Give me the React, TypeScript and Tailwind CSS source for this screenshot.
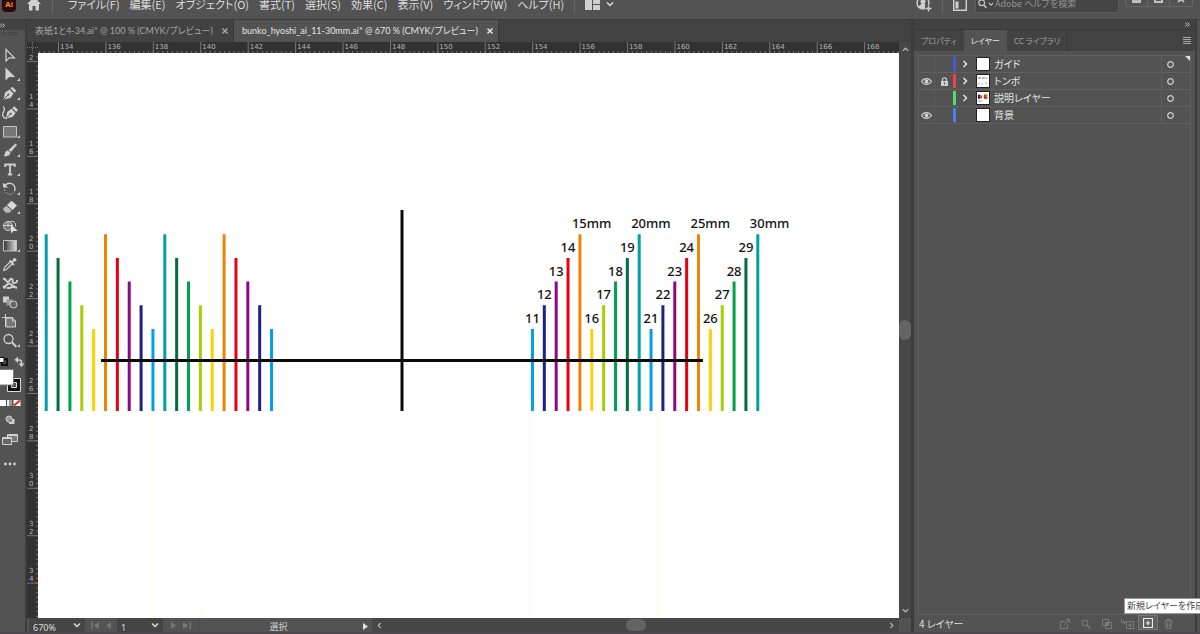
import { useState } from "react";
import type { ReactNode } from "react";

const MENUS = [
  "ファイル(F)",
  "編集(E)",
  "オブジェクト(O)",
  "書式(T)",
  "選択(S)",
  "効果(C)",
  "表示(V)",
  "ウィンドウ(W)",
  "ヘルプ(H)",
];

const DOCUMENTS = [
  { name: "表紙1と4-34.ai* @ 100 % (CMYK/プレビュー)", active: false },
  { name: "bunko_hyoshi_ai_11-30mm.ai* @ 670 % (CMYK/プレビュー)", active: true },
];

// one colour per last digit of the spine width, 11mm first
const SPINE_COLORS = [
  "#00a0e9",
  "#1d2088",
  "#8f0783",
  "#e60012",
  "#f08300",
  "#ffd100",
  "#abcd03",
  "#00a24c",
  "#006e3c",
  "#00a0a4",
];

const CENTER = 364;
const MM = 11.86;
const STEP = 23.7;
const BOTTOM = 358;

const spines = Array.from({ length: 20 }, (_, i) => {
  const level = i % 5;
  return {
    mm: i + 11,
    color: SPINE_COLORS[i % 10],
    top: 276 - level * STEP,
    full: level === 4,
  };
});

type Layer = {
  name: string;
  bar: string;
  visible: boolean;
  locked: boolean;
  group: boolean;
  thumb?: ReactNode;
};

const LAYERS: Layer[] = [
  { name: "ガイド", bar: "bg-[#4b55d6]", visible: false, locked: false, group: true },
  {
    name: "トンボ",
    bar: "bg-[#f0404c]",
    visible: true,
    locked: true,
    group: true,
    thumb: (
      <>
        <path d="M1 3.5h4M6 3.5h3M10 3.5h2" stroke="#555" />
        <path d="M1 10.5h2M5 10.5h2" stroke="#999" />
        <path d="M10 9.5h2" stroke="#5a8" />
      </>
    ),
  },
  {
    name: "説明レイヤー",
    bar: "bg-[#4fe06a]",
    visible: false,
    locked: false,
    group: true,
    thumb: (
      <>
        <path d="M1 3h3v5H1z" fill="#333" />
        <path d="M4 4h2v3H4z" fill="#d33" />
        <path d="M8 3h4v5H8z" fill="#a33" />
        <path d="M10 3h2v3h-2z" fill="#e80" />
        <path d="M1 10h5v1H1z" fill="#888" />
      </>
    ),
  },
  { name: "背景", bar: "bg-[#4c80ee]", visible: true, locked: false, group: false },
];

const TOOLS: { label: string; corner: boolean; icon: ReactNode }[] = [
  {
    label: "選択ツール",
    corner: false,
    icon: <path d="M6 3.5v11.5l3.2-3.2h5.2z" fill="none" stroke="#d0d0d0" strokeWidth="1.2" />,
  },
  {
    label: "ダイレクト選択ツール",
    corner: true,
    icon: <path d="M5.5 2.5v13l3.7-3.6h6z" fill="#d0d0d0" />,
  },
  {
    label: "ペンツール",
    corner: true,
    icon: (
      <>
        <path d="M3.5 15.5l1.6-7 4.4-3 4 4-3 4.4z" fill="#d0d0d0" />
        <path d="M10.5 4.5l1.8-1.8 4 4-1.8 1.8z" fill="#d0d0d0" />
        <path d="M4 15l4-4" stroke="#535353" />
        <circle cx="8.4" cy="10.6" r="1" fill="#535353" />
      </>
    ),
  },
  {
    label: "曲線ツール",
    corner: false,
    icon: (
      <>
        <path d="M6 15.5l1.200-6.500 4.300-3.200 4.200 4.200-3.200 4z" fill="#d0d0d0" />
        <path d="M12.400 5l1.800-1.800 3.900 3.900-1.800 1.800z" fill="#d0d0d0" />
        <path d="M6.500 15l3.700-3.800" stroke="#535353" />
        <circle cx="10.600" cy="10.800" r="1" fill="#535353" />
        <path d="M3 3.500c3 1.500 1 4 0 6.500s0 5.500 4 5.500" fill="none" stroke="#d0d0d0" strokeWidth="1.300" />
      </>
    ),
  },
  {
    label: "長方形ツール",
    corner: true,
    icon: <path d="M3.5 4.5h13v10.500h-13z" fill="#777" stroke="#c4c4c4" />,
  },
  {
    label: "ブラシツール",
    corner: true,
    icon: (
      <>
        <path d="M15.5 2.500l1.500 1.200-6 7.300-2.500-2z" fill="#d0d0d0" />
        <path d="M8 9.500l2.500 2.200c-.5 3-4 4-7 3.300 1.500-.8 1-2 1.800-3.800.6-1.200 1.700-1.700 2.700-1.700z" fill="#d0d0d0" />
      </>
    ),
  },
  {
    label: "文字ツール",
    corner: true,
    icon: (
      <path d="M5.200 7V4.500h9.600V7M10 4.500v9.500M7.800 14.500h4.400" fill="none" stroke="#d0d0d0" strokeWidth="1.800" />
    ),
  },
  {
    label: "回転ツール",
    corner: true,
    icon: (
      <>
        <path d="M5 6.500c2.500-3 7-3 9.200.2 1 1.600 1.200 3.500.4 5.300" fill="none" stroke="#d0d0d0" strokeWidth="1.400" />
        <path d="M3 3.500v5h5z" fill="#d0d0d0" />
        <path d="M4.500 10.500c.5 5 7.500 6.500 10 2" fill="none" stroke="#b8b8b8" strokeDasharray="1.300 1.300" />
      </>
    ),
  },
  {
    label: "消しゴムツール",
    corner: true,
    icon: (
      <>
        <path d="M7 7l4.500-4.200 5.500 4.700-4.500 4.500z" fill="#d8d8d8" />
        <path d="M6.300 7.700l5.500 4.900-2.500 2.200H6l-2.700-2.500v-1.800z" fill="#b8b8b8" />
      </>
    ),
  },
  {
    label: "シェイプ形成ツール",
    corner: false,
    icon: (
      <>
        <circle cx="8" cy="9" r="4.500" fill="#777" stroke="#d0d0d0" />
        <path d="M3.500 8.500h9M8 4.500v5" stroke="#d0d0d0" />
        <path d="M9 5c4-2 7.500.5 6.500 4.500" fill="none" stroke="#d0d0d0" />
        <path d="M11 7.500v9l2.600-2.500h4.200z" fill="#e0e0e0" />
      </>
    ),
  },
  {
    label: "グラデーションツール",
    corner: true,
    icon: (
      <>
        <defs>
          <linearGradient id="tool-gradient">
            <stop offset="0" stopColor="#333" />
            <stop offset="1" stopColor="#ddd" />
          </linearGradient>
        </defs>
        <path d="M3.500 4.500h13v10.500h-13z" fill="url(#tool-gradient)" stroke="#c4c4c4" />
      </>
    ),
  },
  {
    label: "スポイトツール",
    corner: false,
    icon: (
      <>
        <path d="M10 7l-5.500 5.500-.8 2.800 2.800-.8L12 9" fill="none" stroke="#d0d0d0" strokeWidth="1.200" />
        <path d="M9.500 5.500l4.500 4.500M11.500 7.500l3-3" stroke="#d0d0d0" strokeWidth="2" />
        <circle cx="14.700" cy="4.800" r="1.800" fill="#d0d0d0" />
      </>
    ),
  },
  {
    label: "パペットワープツール",
    corner: false,
    icon: (
      <>
        <path
          d="M3 5c3-1 3 3 5 3s1-4 4-3c2 1-1 4 2 4s3-1 3-3"
          fill="none"
          stroke="#d0d0d0"
          strokeWidth="2"
        />
        <path d="M4 13.500c2-1 3-4 5-4s3 3 8 4.500M7 14c3 .5 5-2 9-1" fill="none" stroke="#d0d0d0" strokeWidth="2" />
        <circle cx="4.500" cy="13" r="1.800" fill="#d0d0d0" />
      </>
    ),
  },
  {
    label: "ブレンドツール",
    corner: false,
    icon: (
      <>
        <path d="M3 3.500h6v6H3z" fill="#d0d0d0" />
        <path d="M6.500 6.500h6v6h-6z" fill="#999" />
        <circle cx="13.500" cy="11.500" r="3.500" fill="#666" stroke="#d0d0d0" />
      </>
    ),
  },
  {
    label: "アートボードツール",
    corner: false,
    icon: (
      <>
        <path d="M5.500 2v13M2 5.500h11" fill="none" stroke="#d0d0d0" />
        <path d="M6 6h6.500l3 3v6H6z" fill="#777" stroke="#d0d0d0" />
        <path d="M12.500 6v3h3" fill="none" stroke="#d0d0d0" />
      </>
    ),
  },
  {
    label: "ズームツール",
    corner: true,
    icon: (
      <>
        <circle cx="8.500" cy="8" r="4.500" fill="none" stroke="#d0d0d0" strokeWidth="1.300" />
        <path d="M11.800 11.300l4.500 4.500" stroke="#d0d0d0" strokeWidth="2" />
      </>
    ),
  },
];

const Chevron = ({ d, className }: { d: string; className: string }) => (
  <svg viewBox="0 0 8 8" className={className} aria-hidden="true">
    <path d={d} fill="none" stroke="currentColor" strokeWidth="1.500" />
  </svg>
);

const DOWN = "M1 2.500l3 3 3-3";
const UP = "M1 5.500l3-3 3 3";
const LEFT = "M5.500 1l-3 3 3 3";
const RIGHT = "M2.500 1l3 3-3 3";

const MenuBar = () => (
  <header className="flex h-5 shrink-0 items-end overflow-hidden border-b border-[#3c3c3c] bg-[#535353]">
    <div className="flex h-[30px] w-full shrink-0 items-center">
      <div className="ml-0.5 flex h-4 w-3.5 items-end justify-center rounded-sm bg-[#2d0b08] pb-[3px] font-['Liberation_Sans'] text-[8px] leading-none font-bold text-[#ff9a00]">
        Ai
      </div>
      <button aria-label="ホーム" className="ml-2.5">
        <svg viewBox="0 0 16 16" className="h-4 w-4">
          <path d="M8 1l7 7h-2v6.500H9.500V10h-3v4.500H3V8H1z" fill="#d0d0d0" />
        </svg>
      </button>
      <div className="mx-2.5 h-5 w-px bg-[#666]" />
      <nav className="ml-[5px] flex gap-2.5 text-[11px] leading-none whitespace-nowrap text-[#dcdcdc]">
        {MENUS.map((menu) => (
          <button key={menu}>{menu}</button>
        ))}
      </nav>
      <div className="ml-2.5 h-5 w-px bg-[#666]" />
      <button aria-label="ドキュメントレイアウト" className="ml-2.5 flex items-center gap-1.5 text-[#dcdcdc]">
        <svg viewBox="0 0 15 11" className="h-[11px] w-[15px]">
          <path d="M0 0h7v11H0zM8 0h7v5H8zM8 6h7v5H8z" fill="#d0d0d0" />
        </svg>
        <Chevron d={DOWN} className="h-2 w-2" />
      </button>
      <button aria-label="アカウント" className="ml-auto">
        <svg viewBox="0 0 16 16" className="h-4 w-4">
          <circle cx="7" cy="7" r="6" fill="none" stroke="#d0d0d0" strokeWidth="1.400" />
          <path d="M7 3a2.500 2.500 0 0 1 1.500 4.500c0 1.500 2.500 1 2.500 3.500-2 2-6 2-8 0 0-2.500 2.500-2 2.500-3.500A2.500 2.500 0 0 1 7 3z" fill="#d0d0d0" />
          <path d="M9 9h7v7H9z" fill="#535353" />
          <path d="M12.500 9.500v6M9.500 12.500h6" stroke="#d0d0d0" strokeWidth="1.400" />
        </svg>
      </button>
      <div className="ml-2.5 h-5 w-px bg-[#666]" />
      <button aria-label="ワークスペース" className="ml-2.5">
        <svg viewBox="0 0 14 13" className="h-[13px] w-3.5">
          <path d="M.7.700h12.600v11.600H.7z" fill="none" stroke="#d0d0d0" strokeWidth="1.400" />
          <path d="M2.500 3.500h3v7h-3z" fill="#d0d0d0" />
        </svg>
      </button>
      <label className="ml-2 flex h-[18px] w-36 items-center gap-px rounded-xs border border-[#5e5e5e] bg-[#454545] pl-0.5 text-[#c8c8c8]">
        <svg viewBox="0 0 9 10" className="h-2.5 w-[9px] shrink-0" aria-hidden="true">
          <circle cx="3.700" cy="3.700" r="2.900" fill="none" stroke="currentColor" strokeWidth="1.200" />
          <path d="M5.800 6l2.700 3" stroke="currentColor" strokeWidth="1.500" />
        </svg>
        <Chevron d={DOWN} className="h-1.5 w-1.5 shrink-0" />
        <input
          type="search"
          aria-label="ヘルプを検索"
          placeholder="Adobe ヘルプを検索"
          className="w-full min-w-0 bg-transparent text-[9px] text-[#dcdcdc] outline-none placeholder:text-[#939393]"
        />
      </label>
      <div className="mr-[7px] ml-1.5 flex h-[18px] self-start divide-x divide-[#666] rounded-b-xs border border-[#666] text-[#c0c0c0]">
        <button aria-label="最小化" className="flex w-[22px] items-end justify-center pb-[3px]">
          <svg viewBox="0 0 9 3" className="h-[3px] w-[9px]">
            <path d="M0 0h9v3H0z" fill="currentColor" />
          </svg>
        </button>
        <button aria-label="最大化" className="flex w-[22px] items-end justify-center pb-[3px]">
          <svg viewBox="0 0 9 8" className="h-2 w-[9px]">
            <path d="M1 1h7v6H1z" fill="none" stroke="currentColor" strokeWidth="2" />
          </svg>
        </button>
        <button aria-label="閉じる" className="flex w-[22px] items-end justify-center pb-[3px]">
          <svg viewBox="0 0 8 8" className="h-2 w-2">
            <path d="M1 1l6 6M7 1L1 7" stroke="currentColor" strokeWidth="1.800" />
          </svg>
        </button>
      </div>
    </div>
  </header>
);

const Toolbar = () => (
  <aside className="flex w-[27px] shrink-0 flex-col border-r-2 border-[#3c3c3c] bg-[#535353]">
    <div className="flex h-2.5 shrink-0 items-center bg-[#424242]">
      <svg viewBox="0 0 6 5" className="h-[5px] w-1.5">
        <path d="M0 .5l2 2-2 2M2.500.500l2 2-2 2" fill="none" stroke="#c8c8c8" />
      </svg>
    </div>
    <div className="flex h-4 shrink-0 items-start pt-0.5">
      <svg viewBox="0 0 16 4" className="ml-0.5 h-1 w-4">
        <path d="M0 .5h16M0 2.500h16" stroke="#3a3a3a" strokeDasharray="1 1" />
      </svg>
    </div>
    {TOOLS.map((tool) => (
      <button key={tool.label} aria-label={tool.label} className="h-[19px] w-[25px] shrink-0">
        <svg viewBox="0 0 25 19" className="h-[19px] w-[25px]">
          {tool.icon}
          {tool.corner && <path d="M20 13v3h-3z" fill="#d0d0d0" />}
        </svg>
      </button>
    ))}
    <div className="h-1.5 shrink-0" />
    <svg viewBox="0 0 25 43" className="h-[43px] w-[25px] shrink-0" role="img" aria-label="塗りと線">
      <path d="M2 3h5v6H2z" fill="#535353" stroke="#111" strokeWidth="2" />
      <path d="M-1 1.500h5v5h-5z" fill="#fff" stroke="#111" />
      <path d="M17 4h2.500c1.500 0 2 1 2 2.500V9" fill="none" stroke="#d0d0d0" strokeWidth="1.500" />
      <path d="M18 .5v6.500l-3.500-3.200zM18.500 7.500h6L21.500 11z" fill="#d0d0d0" />
      <path d="M7.500 22.500h13v13h-13z" fill="#111" stroke="#ddd" />
      <path d="M11.500 26.500h5v5h-5z" fill="#535353" stroke="#ddd" />
      <path d="M-1 13.500h14.500V29H-1z" fill="#fff" stroke="#777" />
    </svg>
    <svg viewBox="0 0 25 13" className="h-[13px] w-[25px] shrink-0" role="img" aria-label="カラーモード">
      <path d="M0 1h6v6H0z" fill="#fff" />
      <path d="M7 1h2v6H7z" fill="#eee" />
      <path d="M9 1h3v6H9z" fill="#999" />
      <path d="M13.500 1h7v6h-7z" fill="#fff" />
      <path d="M14 6.500L20 1.500" stroke="#e02020" strokeWidth="2" />
    </svg>
    <button aria-label="描画方法" className="h-[19px] w-[25px] shrink-0">
      <svg viewBox="0 0 25 19" className="h-[19px] w-[25px]">
        <circle cx="9" cy="7" r="3" fill="#999" stroke="#d0d0d0" />
        <path d="M9 7h5.500v5H9z" fill="#d0d0d0" />
        <circle cx="10.500" cy="8.500" r="1.500" fill="#777" />
      </svg>
    </button>
    <button aria-label="スクリーンモード" className="h-[19px] w-[25px] shrink-0">
      <svg viewBox="0 0 25 19" className="h-[19px] w-[25px]">
        <path d="M7.500 3.500h10v7h-10z" fill="#777" stroke="#d0d0d0" />
        <path d="M2.500 6.500h9v7h-9z" fill="#666" stroke="#d0d0d0" />
        <path d="M3 7.500h8M8 4.500h9" stroke="#d0d0d0" />
      </svg>
    </button>
    <button aria-label="ツールバーを編集" className="mt-1 h-[19px] w-[25px] shrink-0">
      <svg viewBox="0 0 25 19" className="h-[19px] w-[25px]">
        <circle cx="5.500" cy="10" r="1.400" fill="#d0d0d0" />
        <circle cx="10" cy="10" r="1.400" fill="#d0d0d0" />
        <circle cx="14.500" cy="10" r="1.400" fill="#d0d0d0" />
      </svg>
    </button>
  </aside>
);

const DocumentTabs = () => (
  <div
    className="flex h-[22px] shrink-0 bg-[#424242] font-['Lato','Noto_Sans_CJK_JP',sans-serif] text-[9px] whitespace-nowrap"
    role="tablist"
  >
    {DOCUMENTS.map(({ name, active }) => (
      <div
        key={name}
        className={`flex items-center justify-between gap-2 border-r border-[#383838] pr-1 pl-2 ${
          active ? "min-w-[259px] bg-[#535353] text-[#e4e4e4]" : "min-w-[207px] text-[#a4a4a4]"
        }`}
      >
        <button role="tab" aria-selected={active}>
          {name}
        </button>
        <button aria-label="閉じる">
          <svg viewBox="0 0 8 8" className="h-2 w-2">
            <path d="M1.500 1.500l5 5M6.500 1.500l-5 5" stroke="currentColor" strokeWidth="1.500" />
          </svg>
        </button>
      </div>
    ))}
  </div>
);

const TICK = 47.42;

const HorizontalRuler = () => (
  <svg className="h-[11px] w-full bg-[#323232]" role="img" aria-label="水平ルーラー">
    <defs>
      <pattern id="h-ticks" x="20" width="4.742" height="11" patternUnits="userSpaceOnUse">
        <path d="M.5 9v2" stroke="#777" />
      </pattern>
    </defs>
    <rect width="100%" height="11" fill="url(#h-ticks)" />
    {Array.from({ length: 18 }, (_, i) => (
      <g key={i}>
        <path d={`M${20.5 + i * TICK} 0v11`} stroke="#777" />
        <text x={22 + i * TICK} y="7" fill="#b4b4b4" className="font-['DejaVu_Sans'] text-[7px]">
          {134 + i * 2}
        </text>
      </g>
    ))}
  </svg>
);

const VerticalRuler = () => (
  <svg className="h-full w-[11px] bg-[#323232]" role="img" aria-label="垂直ルーラー">
    <defs>
      <pattern id="v-ticks" y="8" width="11" height="4.742" patternUnits="userSpaceOnUse">
        <path d="M9 .5h2" stroke="#777" />
      </pattern>
    </defs>
    <rect width="11" height="100%" fill="url(#v-ticks)" />
    {Array.from({ length: 12 }, (_, i) => {
      const y = 8.5 + i * TICK;
      const [tens, ones] = String(12 + i * 2);
      return (
        <g key={i} fill="#b4b4b4" className="font-['DejaVu_Sans'] text-[7px]">
          <path d={`M0 ${y}h11`} stroke="#777" />
          {i > 0 && (
            <text x="2" y={y - 10}>
              {tens}
            </text>
          )}
          <text x="2" y={y - 2}>
            {ones}
          </text>
        </g>
      );
    })}
  </svg>
);

const Artboard = () => (
  <svg className="h-full w-full bg-white" role="img" aria-label="背幅トンボ">
    <g fill="#fffef6">
      <rect x="109" y="358" width="9" height="100%" />
      <rect x="161" y="358" width="4" height="100%" />
      <rect x="491" y="358" width="2" height="100%" />
      <rect x="618" y="358" width="5" height="100%" />
    </g>
    {spines.map(({ mm, color, top, full }) => {
      const right = CENTER + mm * MM;
      const left = CENTER - mm * MM;
      return (
        <g key={mm}>
          <path
            d={`M${left} ${top}V${BOTTOM}M${right} ${top}V${BOTTOM}`}
            stroke={color}
            strokeWidth="3"
          />
          <text
            x={full ? right - 8 : right}
            y={top - 6}
            textAnchor={full ? "start" : "middle"}
            fill="#111"
            className="font-['Noto_Sans'] text-[13px] font-medium"
          >
            {full ? `${mm}mm` : mm}
          </text>
        </g>
      );
    })}
    <path d={`M63 307.500H665M${CENTER} 157V${BOTTOM}`} stroke="#0a0a0a" strokeWidth="3" />
  </svg>
);

const VerticalScrollbar = () => (
  <div className="flex w-3 shrink-0 flex-col items-center justify-between bg-[#474747] py-1 text-[#b0b0b0]">
    <button aria-label="上へスクロール" className="flex">
      <Chevron d={UP} className="h-[7px] w-[7px]" />
    </button>
    <div className="h-5 w-3 rounded-md bg-[#646464]" />
    <button aria-label="下へスクロール" className="flex">
      <Chevron d={DOWN} className="h-[7px] w-[7px]" />
    </button>
  </div>
);

const StatusSelect = ({ label, value, className }: { label: string; value: string; className: string }) => (
  <div className={`relative flex h-full items-center bg-[#454545] ${className}`}>
    <select
      aria-label={label}
      className="h-full w-full appearance-none bg-transparent pt-1 pl-1 font-['Noto_Sans'] text-[9px] leading-3 text-[#dcdcdc] outline-none"
    >
      <option>{value}</option>
    </select>
    <Chevron d={DOWN} className="pointer-events-none absolute right-1 h-2 w-2 text-[#dcdcdc]" />
  </div>
);

const StatusBar = () => (
  <div className="flex h-3.5 shrink-0 items-center bg-[#535353] text-[10px]">
    <StatusSelect label="ズーム" value="670%" className="ml-0.5 w-14" />
    <div className="flex w-8 items-center justify-center gap-[7px]">
      <button aria-label="最初">
        <svg viewBox="0 0 8 7" className="h-[7px] w-2">
          <path d="M0 0h1.500v7H0zM8 0v7L2.500 3.500z" fill="#777" />
        </svg>
      </button>
      <button aria-label="前へ">
        <svg viewBox="0 0 5 7" className="h-[7px] w-[5px]">
          <path d="M5 0v7L0 3.500z" fill="#777" />
        </svg>
      </button>
    </div>
    <StatusSelect label="アートボード" value="1" className="w-[46px]" />
    <div className="flex w-[35px] items-center justify-center gap-[7px]">
      <button aria-label="次へ">
        <svg viewBox="0 0 5 7" className="h-[7px] w-[5px]">
          <path d="M0 0v7l5-3.500z" fill="#777" />
        </svg>
      </button>
      <button aria-label="最後">
        <svg viewBox="0 0 8 7" className="h-[7px] w-2">
          <path d="M6.500 0H8v7H6.500zM0 0v7l5.500-3.500z" fill="#777" />
        </svg>
      </button>
    </div>
    <button className="relative flex h-full w-[174px] items-center justify-center border-l border-[#484848] pt-0.5 pr-3.5 text-[9px] leading-none text-[#d0d0d0]">
      選択
      <svg viewBox="0 0 5 7" className="absolute right-1 h-[7px] w-[5px]">
        <path d="M0 0v7l5-3.500z" fill="#e0e0e0" />
      </svg>
    </button>
    <div className="flex h-full flex-1 items-center justify-between bg-[#474747] px-1 text-[#b0b0b0]">
      <button aria-label="左へスクロール">
        <Chevron d={LEFT} className="h-[7px] w-[7px]" />
      </button>
      <div className="h-3 w-5 rounded-md bg-[#646464]" />
      <button aria-label="右へスクロール">
        <Chevron d={RIGHT} className="h-[7px] w-[7px]" />
      </button>
    </div>
    <div className="h-full w-3 shrink-0 bg-[#535353]" />
  </div>
);

const Eye = () => (
  <svg viewBox="0 0 11 7" className="h-[7px] w-[11px]">
    <path d="M.5 3.500C3-.3 8-.3 10.500 3.500 8 7.300 3 7.300.5 3.500z" fill="none" stroke="#cfcfcf" strokeWidth="1.200" />
    <circle cx="5.500" cy="3.500" r="1.900" fill="#cfcfcf" />
  </svg>
);

const Lock = () => (
  <svg viewBox="0 0 7 9" className="h-[9px] w-[7px]">
    <path d="M1.500 4V2.500C1.500.2 5.500.200 5.500 2.500V4" fill="none" stroke="#cfcfcf" strokeWidth="1.200" />
    <path d="M0 4h7v5H0z" fill="#cfcfcf" />
    <path d="M3.500 5.500v2" stroke="#535353" />
  </svg>
);

const LayerRow = ({ layer }: { layer: Layer }) => {
  const [visible, setVisible] = useState(layer.visible);
  const [locked, setLocked] = useState(layer.locked);

  return (
    <li className="flex h-[17px] items-center border-b border-[#606060]">
      <button
        aria-label="表示の切り替え"
        onClick={() => setVisible(!visible)}
        className="flex h-full w-4 items-center justify-center border-r border-[#5c5c5c]"
      >
        {visible && <Eye />}
      </button>
      <button
        aria-label="ロックの切り替え"
        onClick={() => setLocked(!locked)}
        className="flex h-full w-[18px] items-center justify-center"
      >
        {locked && <Lock />}
      </button>
      <div className={`h-3.5 w-[3px] ${layer.bar}`} />
      <div className="flex w-[18px] justify-center text-[#e4e4e4]">
        {layer.group && (
          <button aria-label="展開">
            <Chevron d={RIGHT} className="h-2 w-2" />
          </button>
        )}
      </div>
      <svg viewBox="0 0 14 14" className="ml-0.5 h-3.5 w-3.5 border border-[#222] bg-white">
        {layer.thumb}
      </svg>
      <span className="flex-1 pl-1 text-[10px] leading-none text-[#e4e4e4]">{layer.name}</span>
      <button
        aria-label="ターゲット"
        className="flex h-full w-[29px] items-center border-l border-[#606060] pl-[5px]"
      >
        <svg viewBox="0 0 7 7" className="h-[7px] w-[7px]">
          <circle cx="3.500" cy="3.500" r="2.800" fill="none" stroke="#cfcfcf" strokeWidth="1.200" />
        </svg>
      </button>
    </li>
  );
};

const PanelFooter = () => (
  <div className="flex h-[17px] shrink-0 items-center pr-4 pl-[5px] text-[#7c7c7c]">
    <span className="text-[10px] leading-none text-[#dcdcdc]">4 レイヤー</span>
    <div className="ml-auto flex h-full items-center">
      <button aria-label="書き出し用に追加" className="flex w-[21px] justify-center">
        <svg viewBox="0 0 10 10" className="h-2.5 w-2.5" fill="none" stroke="currentColor">
          <path d="M5 2.500H.5v7h7V5M4 6l5-5M6 .5h3.500V4" />
        </svg>
      </button>
      <button aria-label="オブジェクトを検索" className="flex w-[21px] justify-center">
        <svg viewBox="0 0 10 10" className="h-2.5 w-2.5" fill="none" stroke="currentColor">
          <circle cx="4" cy="4" r="3" />
          <path d="M6 6l3.500 3.500" strokeWidth="1.500" />
        </svg>
      </button>
      <button aria-label="クリッピングマスク" className="flex w-[21px] justify-center">
        <svg viewBox="0 0 10 10" className="h-2.5 w-2.5" fill="none" stroke="currentColor">
          <path d="M.5.500h6v6h-6zM3.500 3.500h6v6h-6z" />
          <path d="M4 4h2v2H4z" fill="currentColor" />
        </svg>
      </button>
      <button aria-label="サブレイヤー" className="flex w-[21px] justify-center">
        <svg viewBox="0 0 13 10" className="h-2.5 w-[13px]" fill="none" stroke="currentColor">
          <path d="M.5 0v3.500H4M2.500 1.500l2 2-2 2M5.500 2.500h7v7h-7zM9 4v4M7 6h4" />
        </svg>
      </button>
      <div className="relative h-full">
        <button
          aria-label="新規レイヤーを作成"
          className="flex h-[15px] w-5 items-center justify-center border border-[#777] bg-[#606060]"
        >
          <svg viewBox="0 0 10 10" className="h-2.5 w-2.5" fill="none" stroke="#eee">
            <path d="M.5.500h9v9h-9zM5 3v4M3 5h4" strokeWidth="1.200" />
          </svg>
        </button>
        <div
          role="tooltip"
          className="absolute right-[-60px] bottom-[18px] h-4 w-[94px] border border-[#999] bg-white px-0.5 text-[9px] leading-[14px] whitespace-nowrap text-[#444]"
        >
          新規レイヤーを作成
        </div>
      </div>
      <button aria-label="削除" className="flex w-[21px] justify-center">
        <svg viewBox="0 0 9 10" className="h-2.5 w-[9px]" fill="none" stroke="currentColor">
          <path d="M.5 2h8M3 2V.5h3V2M1.500 2l.5 7.500h5l.5-7.500M3.500 4v4M5.500 4v4" />
        </svg>
      </button>
    </div>
  </div>
);

const LayersPanel = () => (
  <aside className="flex w-[281px] shrink-0 flex-col bg-[#535353]">
    <div className="flex h-2.5 shrink-0 items-center justify-end border-b border-[#383838] bg-[#424242] pr-1">
      <svg viewBox="0 0 6 5" className="h-[5px] w-1.5">
        <path d="M0 .5l2 2-2 2M2.500.500l2 2-2 2" fill="none" stroke="#c8c8c8" />
      </svg>
    </div>
    <div
      className="flex h-[21px] shrink-0 items-center bg-[#424242] text-[8px] leading-none whitespace-nowrap text-[#a0a0a0]"
      role="tablist"
    >
      <button role="tab" aria-selected={false} className="h-full px-[7px]">
        プロパティ
      </button>
      <button role="tab" aria-selected={true} className="h-full bg-[#535353] px-[7px] text-[#e4e4e4]">
        レイヤー
      </button>
      <button role="tab" aria-selected={false} className="h-full border-r border-[#383838] px-[7px]">
        CC ライブラリ
      </button>
      <button aria-label="パネルメニュー" className="mr-1 ml-auto">
        <svg viewBox="0 0 8 7" className="h-[7px] w-2">
          <path d="M0 .5h8M0 2.500h8M0 4.500h8M0 6.500h8" stroke="#a8a8a8" />
        </svg>
      </button>
    </div>
    <div className="relative mx-1 mt-1 flex-1 border border-[#5f5f5f]">
      <ul>
        {LAYERS.map((layer) => (
          <LayerRow key={layer.name} layer={layer} />
        ))}
      </ul>
      <svg viewBox="0 0 5 5" className="absolute top-0 right-0 h-[5px] w-[5px]">
        <path d="M0 0h5v5z" fill="#e0e0e0" />
      </svg>
    </div>
    <PanelFooter />
  </aside>
);

export default function App() {
  return (
    <div
      lang="ja"
      className="flex h-screen flex-col overflow-hidden bg-[#3c3c3c] font-['Noto_Sans_CJK_JP',sans-serif] [font-feature-settings:'palt']"
    >
      <MenuBar />
      <div className="flex min-h-0 flex-1">
        <Toolbar />
        <main className="flex min-w-0 flex-1 flex-col">
          <DocumentTabs />
          <div className="flex min-h-0 flex-1">
            <div className="grid min-w-0 flex-1 grid-cols-[11px_minmax(0,1fr)] grid-rows-[11px_minmax(0,1fr)]">
              <div className="flex items-center justify-center bg-[#323232]">
                <svg viewBox="0 0 11 11" className="h-[11px] w-[11px]">
                  <path d="M5.500 0v11M0 5.500h11" stroke="#777" strokeDasharray="1 1" />
                </svg>
              </div>
              <HorizontalRuler />
              <VerticalRuler />
              <Artboard />
            </div>
            <VerticalScrollbar />
          </div>
          <StatusBar />
        </main>
        <div className="flex shrink-0 border-r-2 border-l-[3px] border-[#3c3c3c]">
          <LayersPanel />
        </div>
        <div className="w-[3px] shrink-0 bg-[#505050]" />
      </div>
      <footer className="h-0.5 shrink-0 bg-[#4e484c]" />
    </div>
  );
}
